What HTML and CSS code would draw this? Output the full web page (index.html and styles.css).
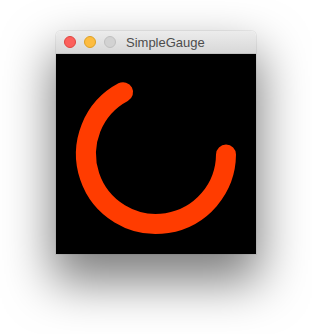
FILE: index.html
```html
<!DOCTYPE html>
<html lang="en">
<head>
  <meta charset="UTF-8">
  <title>SimpleGauge</title>
  <link rel="stylesheet" href="styles.css">
</head>
<body>

  <div class="window">
    <div class="titlebar">
      <span class="light close"></span>
      <span class="light minimize"></span>
      <span class="light zoom"></span>
      <span class="title">SimpleGauge</span>
    </div>
    <div class="content">
      <svg class="gauge" width="200" height="200" viewBox="0 0 200 200">
        <path d="M 67.1 38.2 A 70 70 0 1 0 170 100.5" fill="none" stroke="#ff3c00" stroke-width="20" stroke-linecap="round"/>
      </svg>
    </div>
  </div>

</body>
</html>
```

FILE: styles.css
```css
html {
  height: 100%;
}

body {
  margin: 0;
  height: 100%;
  box-sizing: border-box;
  background-color: #ffffff;
  font-family: "Liberation Sans", Arial, sans-serif;
  display: flex;
  align-items: flex-start;
  padding: 31px 0 0 56px;
}

.window {
  width: 200px;
  border-radius: 5px 5px 0 0;
  box-shadow: 0 24px 48px 4px rgba(0, 0, 0, 0.5), 0 0 0 1px rgba(0, 0, 0, 0.06);
}

.titlebar {
  height: 23px;
  box-sizing: border-box;
  display: flex;
  align-items: center;
  padding-left: 8px;
  background: linear-gradient(#ececec, #d8d8d8);
  border-bottom: 1px solid #c4c4c4;
  border-radius: 5px 5px 0 0;
}

.light {
  width: 12px;
  height: 12px;
  border-radius: 50%;
  margin-right: 8px;
  box-sizing: border-box;
}

.close {
  background-color: #fc605c;
  border: 1px solid #e0443e;
}

.minimize {
  background-color: #fdbc40;
  border: 1px solid #dea123;
}

.zoom {
  background-color: #d2d2d2;
  border: 1px solid #c0c0c0;
}

.title {
  margin-left: 2px;
  font-size: 13px;
  color: #4d4d4d;
}

.content {
  height: 200px;
  background-color: #000000;
}

.gauge {
  display: block;
}
```
